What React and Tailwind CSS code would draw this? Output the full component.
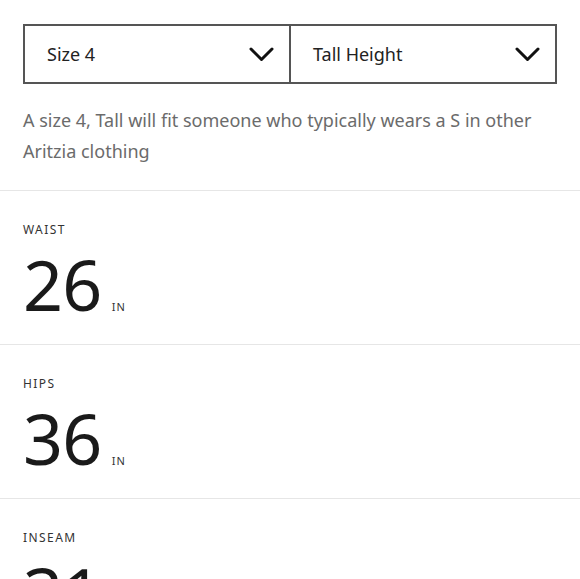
import React from "react";

const Chevron = () => (
  <svg width="25" height="15" viewBox="0 0 25 15" fill="none" stroke="#111" strokeWidth="3" strokeLinecap="round" strokeLinejoin="round">
    <path d="M2 2 L12.5 12.5 L23 2" />
  </svg>
);

const Select = ({ label, className }) => (
  <div className={`flex flex-1 items-center justify-between pl-[22px] pr-[15px] ${className}`}>
    <span className="text-[18px] text-[#222]">{label}</span>
    <Chevron />
  </div>
);

const Measure = ({ name, value }) => (
  <div className="border-t border-[#e6e6e6] px-[23px] pt-[32px] pb-[25px]">
    <div className="text-[12px] tracking-[0.12em] text-[#333] leading-[14px]">{name}</div>
    <div className="mt-[12px] flex items-baseline">
      <span className="text-[70px] leading-[70px] tracking-[-0.01em] text-[#1a1a1a]">{value}</span>
      <span className="ml-[10px] text-[11px] tracking-[0.1em] text-[#333] leading-[12px]">IN</span>
    </div>
  </div>
);

export default function App() {
  return (
    <div className="w-[580px] h-[579px] overflow-hidden bg-white" style={{ fontFamily: '"Noto Sans", Inter, sans-serif' }}>
      <div className="px-[23px] pt-[24px]">
        <div className="flex h-[60px] w-[534px] border-2 border-[#555]">
          <Select label="Size 4" className="border-r-2 border-[#555]" />
          <Select label="Tall Height" />
        </div>
        <p className="mt-[21px] pb-[23px] text-[18px] leading-[31px] text-[#6b6b6b]">
          A size 4, Tall will fit someone who typically wears a S in other Aritzia clothing
        </p>
      </div>
      <Measure name="WAIST" value="26" />
      <Measure name="HIPS" value="36" />
      <Measure name="INSEAM" value="31" />
    </div>
  );
}
